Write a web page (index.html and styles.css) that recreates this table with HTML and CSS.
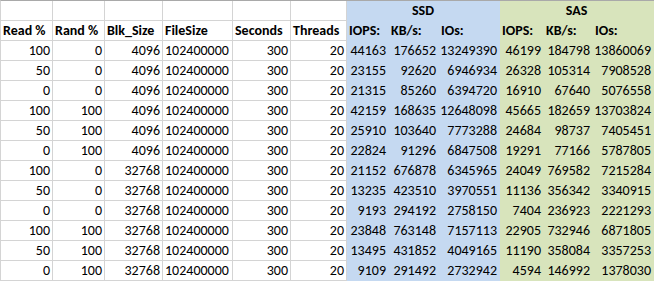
FILE: index.html
```html
<!DOCTYPE html>
<html>
<head>
<meta charset="utf-8">
<link rel="stylesheet" href="styles.css">
</head>
<body>
<div class="sheet">
  <div class="c"></div><div class="c"></div><div class="c"></div><div class="c"></div><div class="c"></div><div class="c"></div>
  <div class="c h ssd group">SSD</div>
  <div class="c h sas group">SAS</div>

  <div class="c h">Read %</div><div class="c h">Rand %</div><div class="c h">Blk_Size</div><div class="c h">FileSize</div><div class="c h">Seconds</div><div class="c h">Threads</div>
  <div class="c h ssd">IOPS:</div><div class="c h ssd">KB/s:</div><div class="c h ssd">IOs:</div>
  <div class="c h sas">IOPS:</div><div class="c h sas">KB/s:</div><div class="c h sas">IOs:</div>

  <div class="c n">100</div><div class="c n">0</div><div class="c n">4096</div><div class="c">102400000</div><div class="c n">300</div><div class="c n">20</div>
  <div class="c n ssd">44163</div><div class="c n ssd">176652</div><div class="c n ssd">13249390</div>
  <div class="c n sas">46199</div><div class="c n sas">184798</div><div class="c n sas">13860069</div>

  <div class="c n">50</div><div class="c n">0</div><div class="c n">4096</div><div class="c">102400000</div><div class="c n">300</div><div class="c n">20</div>
  <div class="c n ssd">23155</div><div class="c n ssd">92620</div><div class="c n ssd">6946934</div>
  <div class="c n sas">26328</div><div class="c n sas">105314</div><div class="c n sas">7908528</div>

  <div class="c n">0</div><div class="c n">0</div><div class="c n">4096</div><div class="c">102400000</div><div class="c n">300</div><div class="c n">20</div>
  <div class="c n ssd">21315</div><div class="c n ssd">85260</div><div class="c n ssd">6394720</div>
  <div class="c n sas">16910</div><div class="c n sas">67640</div><div class="c n sas">5076558</div>

  <div class="c n">100</div><div class="c n">100</div><div class="c n">4096</div><div class="c">102400000</div><div class="c n">300</div><div class="c n">20</div>
  <div class="c n ssd">42159</div><div class="c n ssd">168635</div><div class="c n ssd">12648098</div>
  <div class="c n sas">45665</div><div class="c n sas">182659</div><div class="c n sas">13703824</div>

  <div class="c n">50</div><div class="c n">100</div><div class="c n">4096</div><div class="c">102400000</div><div class="c n">300</div><div class="c n">20</div>
  <div class="c n ssd">25910</div><div class="c n ssd">103640</div><div class="c n ssd">7773288</div>
  <div class="c n sas">24684</div><div class="c n sas">98737</div><div class="c n sas">7405451</div>

  <div class="c n">0</div><div class="c n">100</div><div class="c n">4096</div><div class="c">102400000</div><div class="c n">300</div><div class="c n">20</div>
  <div class="c n ssd">22824</div><div class="c n ssd">91296</div><div class="c n ssd">6847508</div>
  <div class="c n sas">19291</div><div class="c n sas">77166</div><div class="c n sas">5787805</div>

  <div class="c n">100</div><div class="c n">0</div><div class="c n">32768</div><div class="c">102400000</div><div class="c n">300</div><div class="c n">20</div>
  <div class="c n ssd">21152</div><div class="c n ssd">676878</div><div class="c n ssd">6345965</div>
  <div class="c n sas">24049</div><div class="c n sas">769582</div><div class="c n sas">7215284</div>

  <div class="c n">50</div><div class="c n">0</div><div class="c n">32768</div><div class="c">102400000</div><div class="c n">300</div><div class="c n">20</div>
  <div class="c n ssd">13235</div><div class="c n ssd">423510</div><div class="c n ssd">3970551</div>
  <div class="c n sas">11136</div><div class="c n sas">356342</div><div class="c n sas">3340915</div>

  <div class="c n">0</div><div class="c n">0</div><div class="c n">32768</div><div class="c">102400000</div><div class="c n">300</div><div class="c n">20</div>
  <div class="c n ssd">9193</div><div class="c n ssd">294192</div><div class="c n ssd">2758150</div>
  <div class="c n sas">7404</div><div class="c n sas">236923</div><div class="c n sas">2221293</div>

  <div class="c n">100</div><div class="c n">100</div><div class="c n">32768</div><div class="c">102400000</div><div class="c n">300</div><div class="c n">20</div>
  <div class="c n ssd">23848</div><div class="c n ssd">763148</div><div class="c n ssd">7157113</div>
  <div class="c n sas">22905</div><div class="c n sas">732946</div><div class="c n sas">6871805</div>

  <div class="c n">50</div><div class="c n">100</div><div class="c n">32768</div><div class="c">102400000</div><div class="c n">300</div><div class="c n">20</div>
  <div class="c n ssd">13495</div><div class="c n ssd">431852</div><div class="c n ssd">4049165</div>
  <div class="c n sas">11190</div><div class="c n sas">358084</div><div class="c n sas">3357253</div>

  <div class="c n">0</div><div class="c n">100</div><div class="c n">32768</div><div class="c">102400000</div><div class="c n">300</div><div class="c n">20</div>
  <div class="c n ssd">9109</div><div class="c n ssd">291492</div><div class="c n ssd">2732942</div>
  <div class="c n sas">4594</div><div class="c n sas">146992</div><div class="c n sas">1378030</div>
</div>
</body>
</html>
```
FILE: styles.css
```css
html, body {
  margin: 0;
  padding: 0;
  background: #ffffff;
}

.sheet {
  display: grid;
  grid-template-columns: 52px 52px 58px 70px 58px 56px 42px 50px 61px 44px 49px 61px;
  grid-auto-rows: 20px;
  width: 654px;
  box-sizing: border-box;
  border-left: 1px solid #d4d4d4;
  border-top: 1px solid #a9a9a9;
  font-family: Carlito, "Liberation Sans", Arial, sans-serif;
  font-size: 14px;
  color: #000000;
}

.c {
  box-sizing: border-box;
  border-right: 1px solid #d4d4d4;
  border-bottom: 1px solid #d4d4d4;
  padding: 0 2px 3px 2px;
  display: flex;
  align-items: flex-end;
  line-height: 12px;
  white-space: nowrap;
  overflow: hidden;
}

.n {
  justify-content: flex-end;
}

.h {
  font-weight: bold;
}

.group {
  grid-column: span 3;
  justify-content: center;
}

.ssd {
  background: #c5d9f1;
  border-color: #c5d9f1;
}

.sas {
  background: #d8e4bc;
  border-color: #d8e4bc;
}
```
